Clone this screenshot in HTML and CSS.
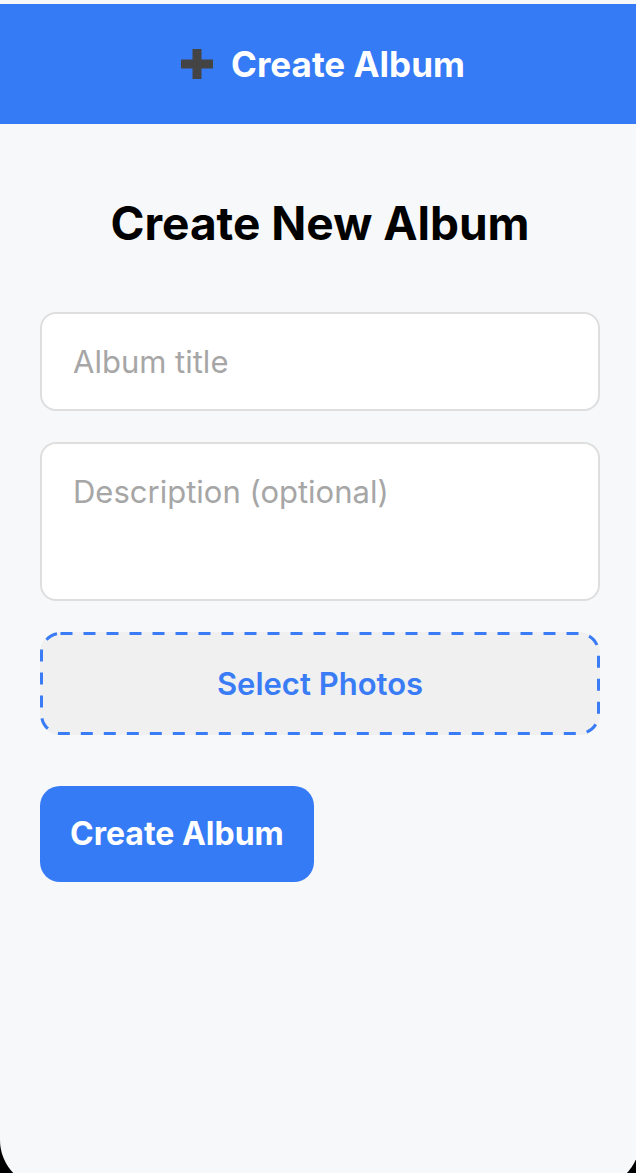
FILE: index.html
```html
<!DOCTYPE html>
<html lang="en">
<head>
<meta charset="utf-8">
<title>Create Album</title>
<link rel="stylesheet" href="styles.css">
</head>
<body>
<div class="app">
  <header class="topbar">
    <svg class="plus" width="32" height="30" viewBox="0 0 32 30" aria-hidden="true">
      <rect x="11.5" y="0" width="9" height="30" fill="#444"/>
      <rect x="0" y="10.5" width="32" height="9" fill="#444"/>
    </svg>
    <span class="topbar-title">Create Album</span>
  </header>
  <main class="content">
    <h1 class="page-title">Create New Album</h1>
    <form class="form">
      <input class="field field-input" type="text" placeholder="Album title">
      <textarea class="field field-area" placeholder="Description (optional)"></textarea>
      <button type="button" class="picker">
        <svg class="picker-border" width="560" height="103" viewBox="0 0 560 103" aria-hidden="true">
          <rect x="1.5" y="1.5" width="557" height="100" rx="19" ry="19" fill="none" stroke="#3a7cf5" stroke-width="3" stroke-dasharray="12 11"/>
        </svg>
        <span class="picker-label">Select Photos</span>
      </button>
      <div class="actions">
        <button type="button" class="submit">Create Album</button>
      </div>
    </form>
  </main>
</div>
</body>
</html>
```
FILE: styles.css
```css
html, body {
  margin: 0;
  padding: 0;
  background: #000;
  overflow: hidden;
}
body {
  font-family: Inter, "Noto Sans", sans-serif;
}
.app {
  width: 640px;
  height: 1188px;
  box-sizing: border-box;
  padding-top: 4px;
  background: #f7f8fa;
  border-radius: 0 0 48px 48px;
  overflow: hidden;
}
.topbar {
  height: 120px;
  background: #367bf6;
  display: flex;
  align-items: center;
  justify-content: center;
  gap: 18px;
}
.plus {
  display: block;
  margin-left: 6px;
  margin-top: -1px;
}
.topbar-title {
  color: #fff;
  font-size: 35px;
  font-weight: 700;
}
.content {
  padding: 72px 40px 0;
}
.page-title {
  margin: 0 0 60px;
  text-align: center;
  font-size: 46px;
  font-weight: 700;
  color: #000;
  line-height: 1.21;
}
.form {
  display: flex;
  flex-direction: column;
  gap: 31px;
}
.field {
  display: block;
  width: 100%;
  box-sizing: border-box;
  border: 2px solid #dedede;
  border-radius: 16px;
  background: #fff;
  font-family: inherit;
  font-size: 31px;
  color: #222;
  padding: 0 31px;
  outline: none;
}
.field::placeholder {
  color: #a6a6a6;
}
.field-input {
  height: 99px;
}
.field-area {
  height: 159px;
  padding-top: 29px;
  resize: none;
  line-height: 1.2;
}
.picker {
  position: relative;
  display: flex;
  align-items: center;
  justify-content: center;
  width: 100%;
  height: 103px;
  box-sizing: border-box;
  border: none;
  border-radius: 20px;
  background: #f0f0f0;
  padding: 0;
  cursor: pointer;
}
.picker-border {
  position: absolute;
  left: 0;
  top: 0;
}
.picker-label {
  color: #3a7cf5;
  font-family: Inter, "Noto Sans", sans-serif;
  font-size: 31px;
  font-weight: 600;
}
.actions {
  padding-top: 20px;
  display: flex;
}
.submit {
  height: 96px;
  padding: 0 30px;
  border: none;
  border-radius: 20px;
  background: #367bf6;
  color: #fff;
  font-family: inherit;
  font-size: 32px;
  font-weight: 700;
  cursor: pointer;
}
```
